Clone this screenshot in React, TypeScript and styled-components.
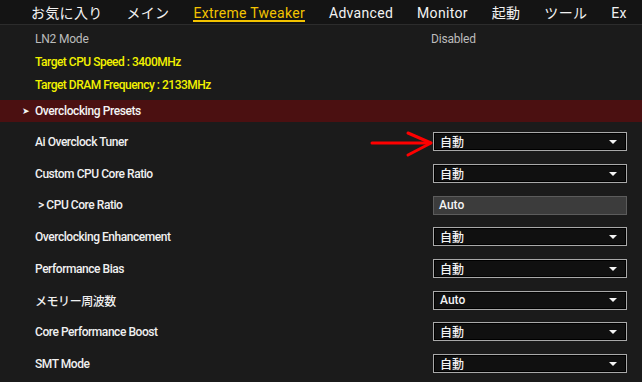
import React from 'react';
import styled, { createGlobalStyle } from 'styled-components';

const GlobalStyle = createGlobalStyle`
  html, body { margin: 0; padding: 0; background: #1b1b1b; }
  body { font-family: Roboto, "Noto Sans CJK JP", sans-serif; }
`;

const Page = styled.div`
  position: relative;
  width: 642px;
  height: 382px;
  overflow: hidden;
  background: #1b1b1b;
  display: flex;
  flex-direction: column;
`;

const NavBar = styled.nav`
  flex: none;
  height: 24px;
  border-bottom: 1px solid #2c2c2c;
  background: #141414;
  display: flex;
  align-items: flex-start;
  gap: 24px;
  padding-left: 31px;
  white-space: nowrap;
  overflow: hidden;
`;

const Tab = styled.div<{ $active?: boolean }>`
  position: relative;
  box-sizing: border-box;
  height: 24px;
  padding-top: 2px;
  font-size: 14px;
  letter-spacing: 0.3px;
  line-height: 22px;
  color: ${(p) => (p.$active ? '#f3c300' : '#f2f2f2')};
  &::after {
    content: '';
    display: ${(p) => (p.$active ? 'block' : 'none')};
    position: absolute;
    left: 0;
    right: 0;
    bottom: 2px;
    height: 2px;
    background: #f3c300;
  }
`;

const InfoSection = styled.section`
  padding: 2px 0 4px 35px;
  display: flex;
  flex-direction: column;
`;

const InfoRow = styled.div<{ $tone: 'gray' | 'yellow' }>`
  height: 23px;
  display: grid;
  grid-template-columns: 396px 1fr;
  align-items: center;
  font-size: 12px;
  letter-spacing: ${(p) => (p.$tone === 'yellow' ? '-0.5px' : '-0.2px')};
  font-weight: ${(p) => (p.$tone === 'yellow' ? 500 : 400)};
  color: ${(p) => (p.$tone === 'yellow' ? '#f2f200' : '#bcbcbc')};
`;

const SectionBar = styled.div`
  height: 22px;
  background: #4b1011;
  display: flex;
  align-items: center;
  padding-left: 22px;
  font-size: 12px;
  font-weight: 500;
  letter-spacing: -0.4px;
  color: #f4f4f4;
`;

const BarArrow = styled.span`
  width: 13px;
  font-size: 9px;
  line-height: 1;
`;

const SettingsList = styled.div`
  padding-top: 4px;
  display: flex;
  flex-direction: column;
`;

const SettingRow = styled.div`
  height: 31.7px;
  display: grid;
  grid-template-columns: 398px 194px;
  align-items: center;
  padding-left: 35px;
`;

const Label = styled.div<{ $sub?: boolean }>`
  font-size: 12px;
  font-weight: 500;
  letter-spacing: -0.45px;
  color: #f0f0f0;
  padding-left: ${(p) => (p.$sub ? '3px' : '0')};
`;

const SelectBox = styled.div`
  box-sizing: border-box;
  height: 19px;
  display: flex;
  align-items: center;
  justify-content: space-between;
  padding: 0 9px 0 6px;
  border: 1px solid #a9a9a9;
  background: #101010;
  box-shadow: inset 0 0 0 1px #000;
  font-size: 12px;
  font-weight: 500;
  color: #f4f4f4;
`;

const Caret = styled.span`
  width: 0;
  height: 0;
  border-left: 4px solid transparent;
  border-right: 4px solid transparent;
  border-top: 4px solid #f4f4f4;
`;

const TextField = styled.div`
  box-sizing: border-box;
  height: 19px;
  display: flex;
  align-items: center;
  padding: 0 5px;
  border: 1px solid #5c5c5c;
  background: #3c3c3c;
  font-size: 12px;
  font-weight: 500;
  color: #f4f4f4;
`;

const Annotation = styled.svg`
  position: absolute;
  left: 368px;
  top: 128px;
`;

type Setting = { label: string; value: string; kind: 'select' | 'text'; sub?: boolean };

const settings: Setting[] = [
  { label: 'Ai Overclock Tuner', value: '自動', kind: 'select' },
  { label: 'Custom CPU Core Ratio', value: '自動', kind: 'select' },
  { label: '> CPU Core Ratio', value: 'Auto', kind: 'text', sub: true },
  { label: 'Overclocking Enhancement', value: '自動', kind: 'select' },
  { label: 'Performance Bias', value: '自動', kind: 'select' },
  { label: 'メモリー周波数', value: 'Auto', kind: 'select' },
  { label: 'Core Performance Boost', value: '自動', kind: 'select' },
  { label: 'SMT Mode', value: '自動', kind: 'select' },
];

const tabs = ['お気に入り', 'メイン', 'Extreme Tweaker', 'Advanced', 'Monitor', '起動', 'ツール', 'Ex'];

export default function App() {
  return (
    <Page>
      <GlobalStyle />
      <NavBar>
        {tabs.map((t) => (
          <Tab key={t} $active={t === 'Extreme Tweaker'}>
            {t}
          </Tab>
        ))}
      </NavBar>
      <InfoSection>
        <InfoRow $tone="gray">
          <span>LN2 Mode</span>
          <span>Disabled</span>
        </InfoRow>
        <InfoRow $tone="yellow">
          <span>Target CPU Speed : 3400MHz</span>
        </InfoRow>
        <InfoRow $tone="yellow">
          <span>Target DRAM Frequency : 2133MHz</span>
        </InfoRow>
      </InfoSection>
      <SectionBar>
        <BarArrow>➤</BarArrow>
        Overclocking Presets
      </SectionBar>
      <SettingsList>
        {settings.map((s) => (
          <SettingRow key={s.label}>
            <Label $sub={s.sub}>{s.label}</Label>
            {s.kind === 'select' ? (
              <SelectBox>
                <span>{s.value}</span>
                <Caret />
              </SelectBox>
            ) : (
              <TextField>{s.value}</TextField>
            )}
          </SettingRow>
        ))}
      </SettingsList>
      <Annotation width="66" height="32" viewBox="0 0 66 32">
        <g stroke="#ff0000" strokeWidth="3" fill="none" strokeLinecap="round" strokeLinejoin="round">
          <line x1="4" y1="15" x2="62" y2="15" />
          <polyline points="40,5 63,15 40,27" />
        </g>
      </Annotation>
    </Page>
  );
}
